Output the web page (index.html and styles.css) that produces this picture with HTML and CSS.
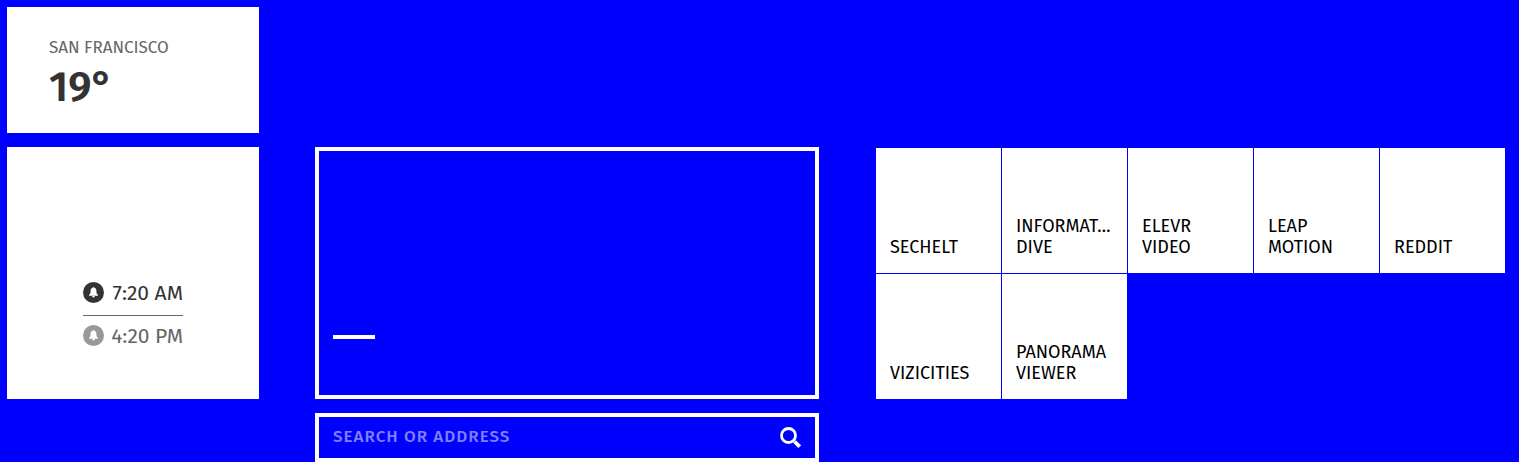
FILE: index.html
```html
<!DOCTYPE html>
<html lang="en">
<head>
<meta charset="utf-8">
<title>New Tab</title>
<link rel="stylesheet" href="styles.css">
</head>
<body>
<main class="dashboard">
  <section class="card weather">
    <p class="weather-city">San Francisco</p>
    <p class="weather-temp">19°</p>
  </section>
  <section class="card alarms">
    <ul class="alarm-list">
      <li class="alarm">
        <svg class="bell" viewBox="0 0 21 21" aria-hidden="true"><circle cx="10.500" cy="10.500" r="10.500" fill="currentColor"/><path fill="#fff" d="M10.500 5c.5 0 .8.300.8.800 1.500.3 2.100 1.500 2.100 2.900 0 2.400.3 3.300 1.600 4.100v.9H6v-.9c1.300-.8 1.600-1.700 1.600-4.100 0-1.400.6-2.600 2.100-2.900 0-.5.300-.8.800-.8zM9.200 14h2.600c0 .9-.6 1.500-1.300 1.500S9.200 14.900 9.200 14z"/></svg>
        <time class="alarm-time" datetime="07:20">7:20 AM</time>
      </li>
      <li class="alarm alarm-off">
        <svg class="bell" viewBox="0 0 21 21" aria-hidden="true"><circle cx="10.500" cy="10.500" r="10.500" fill="currentColor"/><path fill="#fff" d="M10.500 5c.5 0 .8.300.8.800 1.500.3 2.100 1.500 2.100 2.900 0 2.400.3 3.300 1.600 4.100v.9H6v-.9c1.300-.8 1.600-1.700 1.600-4.100 0-1.400.6-2.600 2.100-2.900 0-.5.300-.8.800-.8zM9.200 14h2.600c0 .9-.6 1.500-1.300 1.500S9.200 14.900 9.200 14z"/></svg>
        <time class="alarm-time" datetime="16:20">4:20 PM</time>
      </li>
    </ul>
  </section>
  <section class="panel"><div class="panel-dash"></div></section>
  <form class="search">
    <input class="search-input" type="text" placeholder="SEARCH OR ADDRESS" aria-label="Search or address">
    <button class="search-button" type="submit" aria-label="Search">
      <svg class="search-icon" viewBox="0 0 21 21" aria-hidden="true"><circle cx="8.500" cy="8.500" r="7" fill="none" stroke="#fff" stroke-width="2.800"/><path d="M14.500 14.500l5.200 5.200" stroke="#fff" stroke-width="3.800"/></svg>
    </button>
  </form>
  <nav class="tiles" aria-label="Bookmarks">
    <a class="tile" href="#"><span class="word">Sechelt</span></a>
    <a class="tile" href="#"><span class="word">Informat…</span><span class="word">Dive</span></a>
    <a class="tile" href="#"><span class="word">eleVR</span><span class="word">Video</span></a>
    <a class="tile" href="#"><span class="word">Leap</span><span class="word">Motion</span></a>
    <a class="tile" href="#"><span class="word">Reddit</span></a>
    <a class="tile" href="#"><span class="word">ViziCities</span></a>
    <a class="tile" href="#"><span class="word">Panorama</span><span class="word">Viewer</span></a>
  </nav>
</main>
</body>
</html>
```
FILE: styles.css
```css
* {
  box-sizing: border-box;
}

body {
  margin: 0;
  background: #00f;
  color: #000;
  font-family: "Fira Sans", "Noto Sans", sans-serif;
  font-size: 18px;
  line-height: 21px;
}

p,
ul {
  margin: 0;
  padding: 0;
  list-style: none;
}

.dashboard {
  display: grid;
  grid-template-columns: 2fr 4fr 5fr;
  grid-template-areas:
    "weather . ."
    "alarms panel tiles"
    ". search .";
  gap: 14px 56px;
  padding: 7px 14px 0 7px;
}

.card {
  background: #fff;
}

.weather {
  grid-area: weather;
  padding: 30px 42px 22px;
  color: #666;
  text-transform: uppercase;
}

.weather-city {
  font-size: 17px;
}

.weather-temp {
  padding-top: 5px;
  color: #333;
  font-size: 42px;
  font-weight: 600;
  line-height: 48px;
}

.alarms {
  grid-area: alarms;
  display: flex;
  justify-content: center;
  align-items: flex-end;
  padding: 42px;
}

.alarm-list {
  width: 100px;
}

.alarm {
  display: flex;
  align-items: center;
  justify-content: space-between;
  height: 42px;
  padding-bottom: 3px;
  color: #333;
  white-space: nowrap;
}

.alarm + .alarm {
  padding-bottom: 2px;
  border-top: 1px solid #666;
}

.alarm-off {
  color: #999;
}

.bell {
  width: 21px;
  height: 21px;
}

.alarm-time {
  padding-top: 2px;
  font-size: 21px;
}

.alarm-off .alarm-time {
  color: #666;
}

.panel {
  grid-area: panel;
  display: flex;
  align-items: flex-end;
  min-height: 252px;
  padding: 56px 14px;
  border: 4px solid #fff;
}

.panel-dash {
  width: 42px;
  height: 4px;
  background: #fff;
}

.search {
  grid-area: search;
  display: flex;
  align-items: center;
  padding: 0 14px;
  border: 4px solid #fff;
}

.search-input {
  flex: 1;
  min-width: 0;
  height: 41px;
  padding: 0 0 2px;
  border: 0;
  outline: 0;
  background: transparent;
  color: #fff;
  font: inherit;
  font-size: 17px;
  font-weight: 500;
  letter-spacing: 1px;
}

.search-input::placeholder {
  color: #8080ff;
  opacity: 1;
}

.search-button {
  display: flex;
  padding: 0;
  border: 0;
  background: transparent;
}

.search-icon {
  width: 21px;
  height: 21px;
}

.tiles {
  grid-area: tiles;
  display: grid;
  grid-template-columns: repeat(5, 1fr);
  grid-auto-rows: 1fr;
}

.tile {
  display: flex;
  flex-direction: column;
  justify-content: flex-end;
  min-width: 0;
  padding: 14px 14px 15px;
  border: solid #00f;
  border-width: 1px 0 0 1px;
  background: #fff;
  color: #000;
  text-decoration: none;
  text-transform: uppercase;
}

.word {
  white-space: nowrap;
}
```
